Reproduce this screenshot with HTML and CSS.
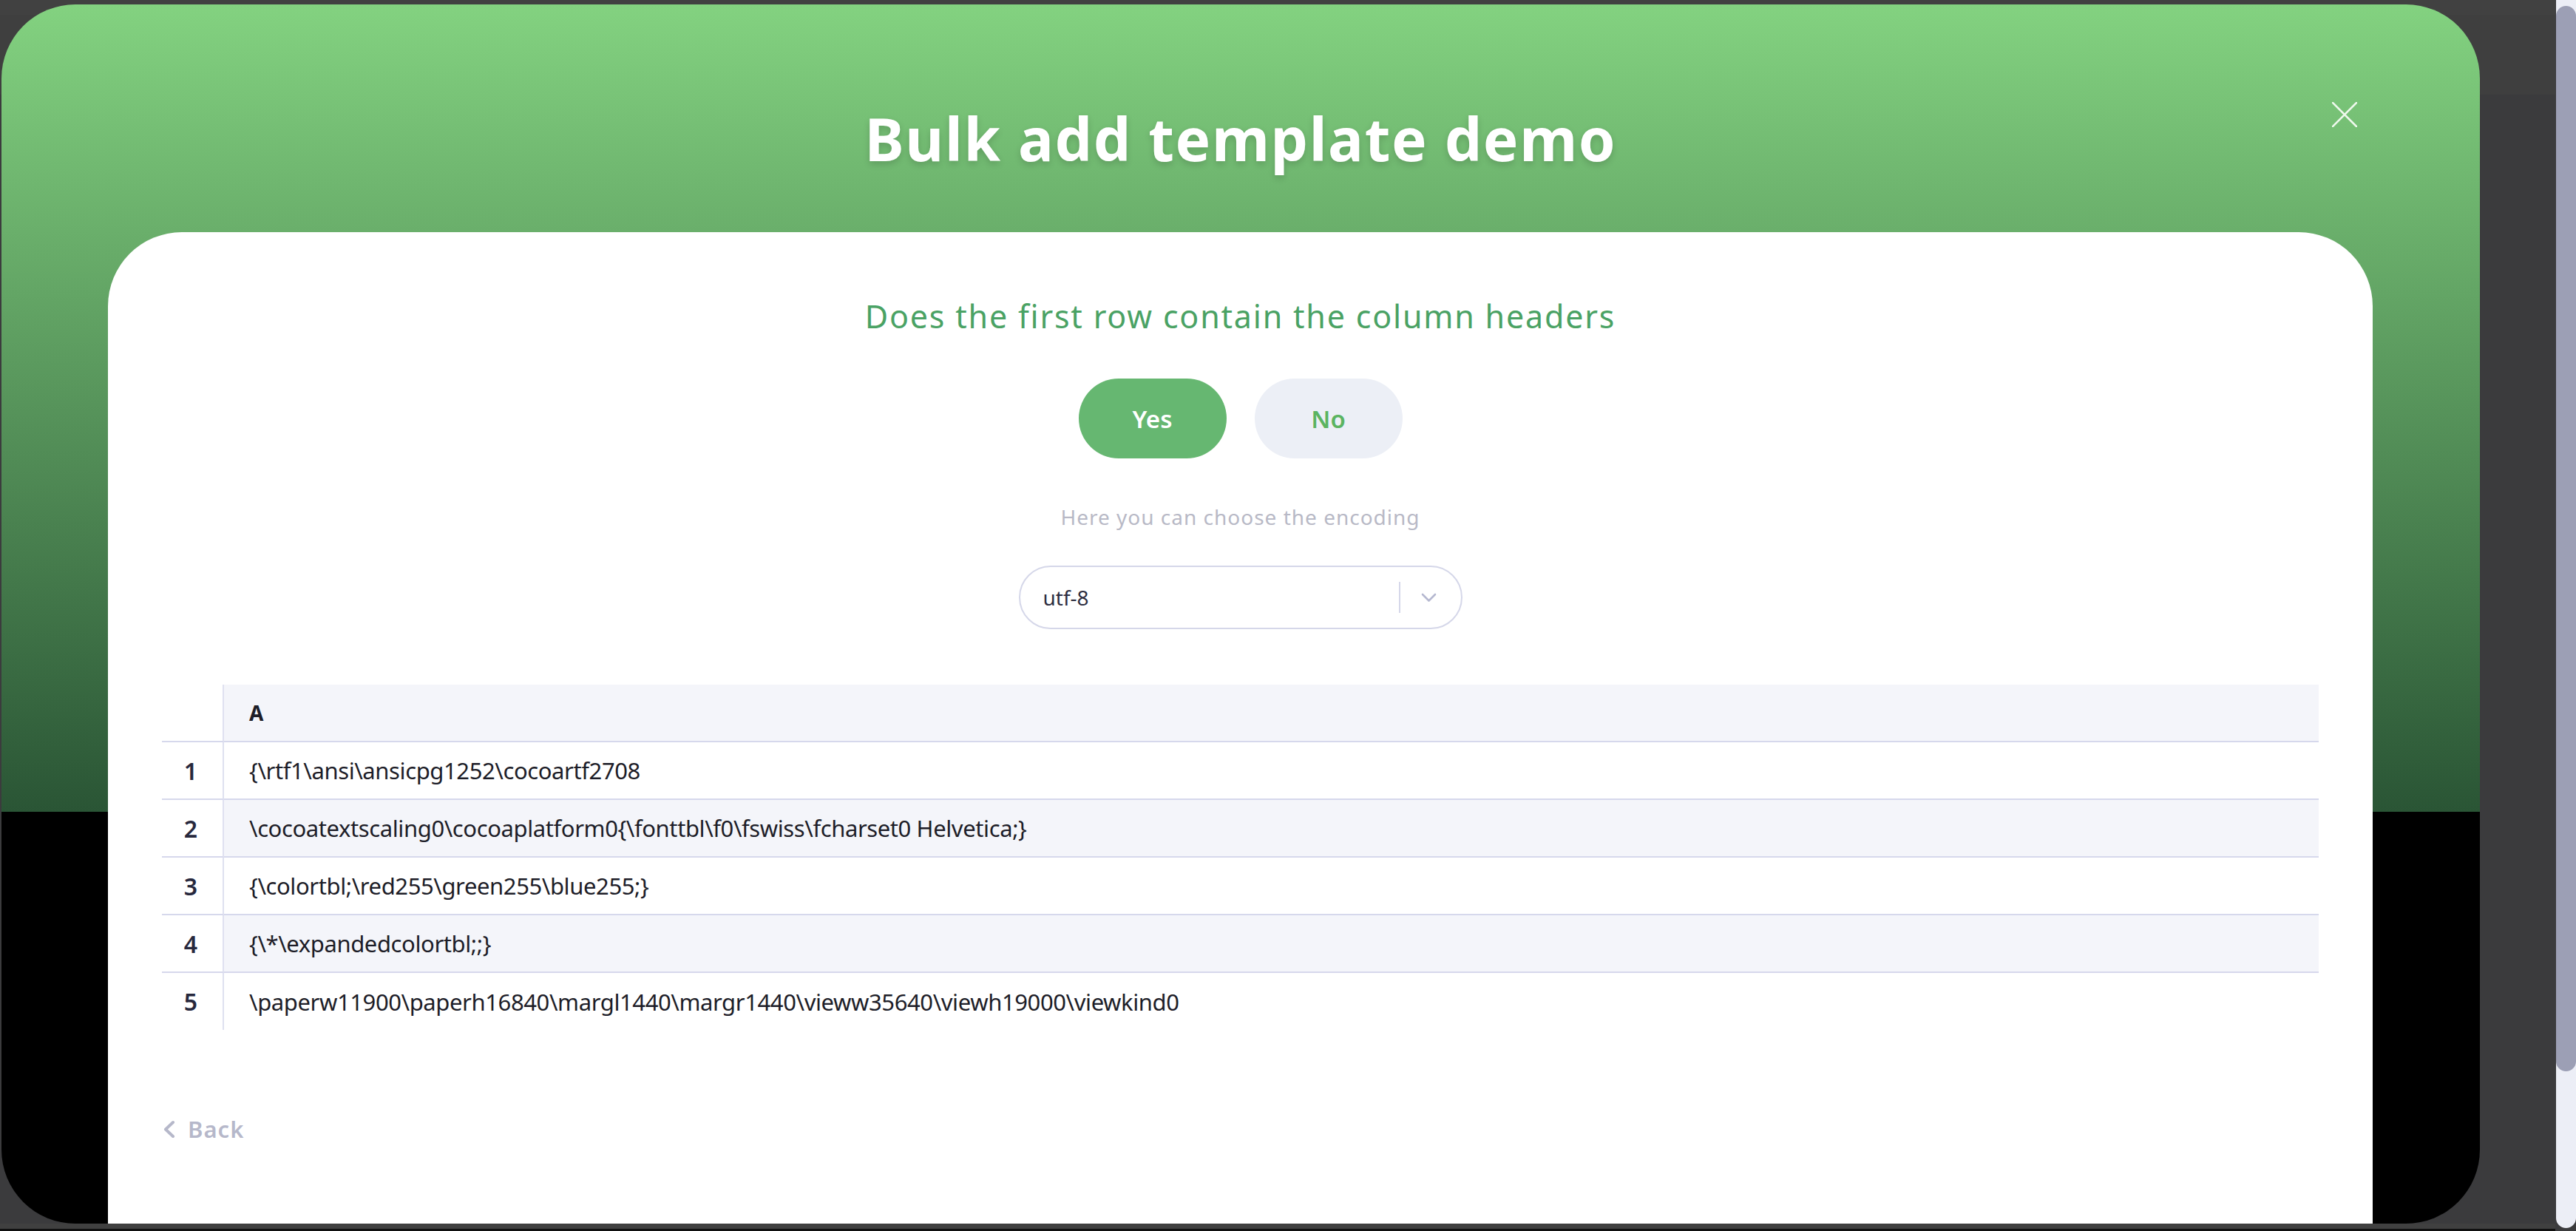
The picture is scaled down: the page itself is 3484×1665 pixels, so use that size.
FILE: index.html
```html
<!DOCTYPE html>
<html lang="en">
<head>
<meta charset="utf-8">
<title>Bulk add template demo</title>
<link rel="stylesheet" href="styles.css">
</head>
<body>
  <div class="workspace">
    <div class="stage">
      <div class="modal">
        <header class="modal-head">
          <h1 class="modal-title">Bulk add template demo</h1>
          <button class="close" aria-label="Close">
            <svg width="34" height="34" viewBox="0 0 34 34"><path d="M1 1 L33 33 M33 1 L1 33" stroke="currentColor" stroke-width="2.6" stroke-linecap="square" fill="none"/></svg>
          </button>
        </header>
        <section class="card">
          <h2 class="question">Does the first row contain the column headers</h2>
          <div class="choices">
            <button class="choice choice-yes">Yes</button>
            <button class="choice choice-no">No</button>
          </div>
          <p class="hint">Here you can choose the encoding</p>
          <div class="select">
            <span class="select-value">utf-8</span>
            <span class="select-divider"></span>
            <svg class="select-chevron" width="23" height="14" viewBox="0 0 23 14"><path d="M3 3 L11.5 11.5 L20 3" stroke="currentColor" stroke-width="2.6" fill="none" stroke-linecap="round" stroke-linejoin="round"/></svg>
          </div>
          <div class="sheet" role="table">
            <div class="row head" role="row">
              <div class="num" role="columnheader"></div>
              <div class="cell" role="columnheader">A</div>
            </div>
            <div class="row" role="row">
              <div class="num" role="cell">1</div>
              <div class="cell" role="cell">{\rtf1\ansi\ansicpg1252\cocoartf2708</div>
            </div>
            <div class="row alt" role="row">
              <div class="num" role="cell">2</div>
              <div class="cell" role="cell">\cocoatextscaling0\cocoaplatform0{\fonttbl\f0\fswiss\fcharset0 Helvetica;}</div>
            </div>
            <div class="row" role="row">
              <div class="num" role="cell">3</div>
              <div class="cell" role="cell">{\colortbl;\red255\green255\blue255;}</div>
            </div>
            <div class="row alt" role="row">
              <div class="num" role="cell">4</div>
              <div class="cell" role="cell">{\*\expandedcolortbl;;}</div>
            </div>
            <div class="row last" role="row">
              <div class="num" role="cell">5</div>
              <div class="cell" role="cell">\paperw11900\paperh16840\margl1440\margr1440\vieww35640\viewh19000\viewkind0</div>
            </div>
          </div>
          <a class="back" href="#">
            <svg width="19" height="25" viewBox="0 0 19 25"><path d="M15 3 L5 12.5 L15 22" stroke="currentColor" stroke-width="4" fill="none" stroke-linecap="round" stroke-linejoin="round"/></svg>
            <span>Back</span>
          </a>
        </section>
      </div>
    </div>
    <div class="statusbar"></div>
  </div>
  <div class="scrollbar">
    <div class="track"><div class="thumb"></div></div>
  </div>
</body>
</html>
```

FILE: styles.css
```css
* { box-sizing: border-box; }

html, body {
  margin: 0;
  padding: 0;
}

body {
  width: 3484px;
  height: 1665px;
  overflow: hidden;
  display: flex;
  background: #3b3b3d;
  font-family: "Noto Sans", "Open Sans", sans-serif;
}

.workspace {
  flex: 1;
  display: flex;
  flex-direction: column;
  background: linear-gradient(180deg, #414141 0, #414141 20px, #3f3f3f 20px, #3f3f3f 128px, #3b3b3d 128px);
}

.stage {
  flex: 1;
  display: flex;
  padding: 6px 0 0 2px;
  min-height: 0;
}

.modal {
  width: 3352px;
  height: 1649px;
  border-radius: 100px;
  overflow: hidden;
  display: flex;
  flex-direction: column;
  position: relative;
  background: linear-gradient(180deg, #83d280 0, #2a5535 1092px, #000 1092px);
}

.modal-head {
  height: 308px;
  flex: none;
  padding-top: 133px;
  text-align: center;
}

.modal-title {
  margin: 0;
  font-size: 80px;
  line-height: 96px;
  font-weight: 700;
  letter-spacing: 1.6px;
  color: #fff;
  text-shadow: 0 4px 10px rgba(0, 0, 0, 0.16);
}

.close {
  position: absolute;
  top: 132px;
  right: 166px;
  width: 34px;
  height: 34px;
  padding: 0;
  border: 0;
  background: none;
  color: #eef8ec;
  display: block;
}
.close svg { display: block; }

.card {
  flex: 1;
  margin: 0 145px 0 144px;
  background: #fff;
  border-radius: 100px 100px 0 0;
  padding: 84px 73px 0;
  display: flex;
  flex-direction: column;
  align-items: center;
}

.question {
  margin: 0;
  font-size: 43px;
  line-height: 60px;
  font-weight: 400;
  letter-spacing: 1.8px;
  color: #4aa264;
}

.choices {
  margin-top: 54px;
  display: flex;
  gap: 38px;
}

.choice {
  width: 200px;
  height: 108px;
  border: 0;
  border-radius: 54px;
  font-family: inherit;
  font-size: 33px;
  font-weight: 600;
  padding: 0;
}
.choice-yes { background: #66b771; color: #fff; }
.choice-no { background: #eceff6; color: #5bb461; }

.hint {
  margin: 59px 0 0;
  font-size: 28px;
  line-height: 40px;
  letter-spacing: 1px;
  color: #b8b9c6;
}

.select {
  margin-top: 46px;
  width: 600px;
  height: 86px;
  border: 2px solid #d5d7e9;
  border-radius: 43px;
  display: flex;
  align-items: center;
  padding: 0 32px 0 31px;
}
.select-value {
  flex: 1;
  font-size: 28px;
  color: #2d2d40;
}
.select-divider {
  width: 2px;
  height: 42px;
  background: #d5d7e9;
}
.select-chevron {
  margin-left: 27px;
  color: #b5b8d0;
  display: block;
}

.sheet {
  align-self: stretch;
  margin-top: 75px;
  display: flex;
  flex-direction: column;
}

.row {
  display: grid;
  grid-template-columns: 84px 1fr;
  height: 78px;
}
.row.last { height: 77px; }

.num, .cell {
  display: flex;
  align-items: center;
  border-bottom: 2px solid #d6d8ec;
}
.row.last .num, .row.last .cell { border-bottom: 0; }

.num {
  justify-content: center;
  border-right: 2px solid #dfe1f0;
  font-size: 32px;
  font-weight: 600;
  color: #27283d;
  padding-right: 4px;
}

.cell {
  padding-left: 34px;
  font-size: 31px;
  letter-spacing: -0.4px;
  color: #1d1d28;
  white-space: nowrap;
}

.head .cell {
  background: #f4f5fa;
  font-size: 28px;
  font-weight: 700;
  letter-spacing: 0;
  color: #1d1d28;
}
.row.alt .cell { background: #f4f5fa; }

.back {
  align-self: flex-start;
  margin-top: 112px;
  display: flex;
  align-items: center;
  gap: 16px;
  text-decoration: none;
  color: #b6b8ca;
  font-size: 31px;
  line-height: 44px;
  font-weight: 600;
  letter-spacing: 1px;
}
.back svg { display: block; }

.statusbar {
  height: 10px;
  flex: none;
  background: linear-gradient(180deg, #404040 0, #404040 7px, #111 7px);
}

.scrollbar {
  width: 28px;
  flex: none;
  padding-left: 1px;
}
.track {
  height: 1661px;
  background: #eceef6;
  border-radius: 0 0 14px 14px;
  padding-top: 8px;
}
.thumb {
  height: 1441px;
  background: #9c9fb5;
  border-radius: 14px;
}
```
